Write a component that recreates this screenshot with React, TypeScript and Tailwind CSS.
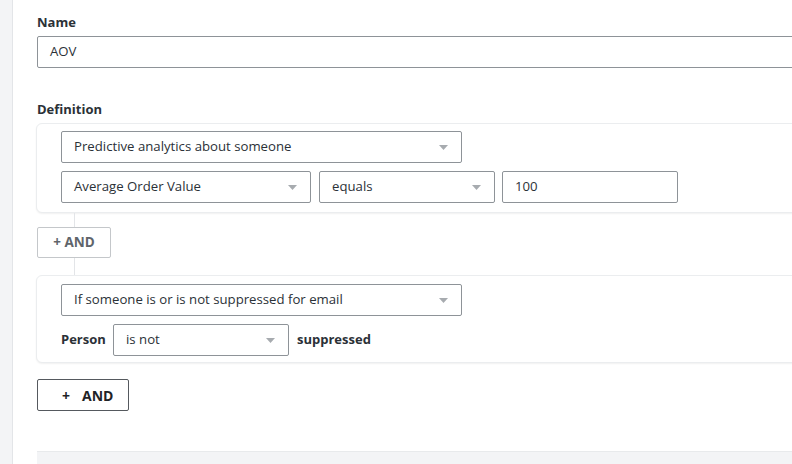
import React from "react";

const font = { fontFamily: "'Open Sans', 'Liberation Sans', sans-serif" };

function Caret() {
  return (
    <svg width="9" height="5" viewBox="0 0 9 5" className="shrink-0">
      <path d="M0 0 L9 0 L4.5 5 Z" fill="#a7abaf" />
    </svg>
  );
}

function Select({ w, text }: { w: string; text: string }) {
  return (
    <div
      className={`${w} shrink-0 h-[32px] border border-[#8e9398] rounded-[2px] bg-white flex items-center justify-between pl-[12px] pr-[13px] text-[13.2px] text-[#2b3137]`}
    >
      <span>{text}</span>
      <Caret />
    </div>
  );
}

export default function App() {
  return (
    <div className="w-[792px] h-[464px] overflow-hidden flex bg-white" style={font}>
      <div className="w-[13px] shrink-0 bg-[#f3f4f6] border-r border-[#e3e5e8]" />
      <div className="flex-1 pl-[24px] pt-[14px] flex flex-col">
        <div className="shrink-0 text-[13px] font-bold text-[#2b3137] leading-[16px]">Name</div>
        <div className="shrink-0 mt-[6px] w-[800px] h-[32px] border border-[#8e9398] rounded-[2px] flex items-center pl-[12px] text-[13.2px] text-[#2b3137]">
          AOV
        </div>
        <div className="shrink-0 mt-[33px] text-[13px] font-bold text-[#2b3137] leading-[16px]">Definition</div>
        <div className="shrink-0 mt-[6px] -ml-px w-[800px] rounded-[6px] border border-[#ebedef] shadow-[0_1px_2px_rgba(0,0,0,0.06)] bg-white pl-[24px] pt-[7px] pb-[9px] flex flex-col gap-[8px]">
          <Select w="w-[401px]" text="Predictive analytics about someone" />
          <div className="flex">
            <Select w="w-[250px]" text="Average Order Value" />
            <div className="w-[8px] shrink-0" />
            <Select w="w-[176px]" text="equals" />
            <div className="w-[7px] shrink-0" />
            <div className="w-[176px] shrink-0 h-[32px] border border-[#8e9398] rounded-[2px] flex items-center pl-[12px] text-[13.2px] text-[#2b3137]">
              100
            </div>
          </div>
        </div>
        <div className="shrink-0 ml-[37px] w-px h-[14px] bg-[#e3e5e8]" />
        <div className="shrink-0 w-[74px] h-[31px] border border-[#c4c7ca] rounded-[2px] flex items-center justify-center text-[13.5px] font-bold text-[#5f656b]">
          + AND
        </div>
        <div className="shrink-0 ml-[37px] w-px h-[17px] bg-[#e3e5e8]" />
        <div className="shrink-0 -ml-px w-[800px] rounded-[6px] border border-[#ebedef] shadow-[0_1px_2px_rgba(0,0,0,0.06)] bg-white pl-[24px] pt-[8px] pb-[6px] flex flex-col gap-[8px]">
          <Select w="w-[401px]" text="If someone is or is not suppressed for email" />
          <div className="flex items-center">
            <span className="text-[13px] font-bold text-[#2b3137] w-[52px]">Person</span>
            <Select w="w-[176px]" text="is not" />
            <span className="ml-[8px] text-[13px] font-bold text-[#2b3137]">suppressed</span>
          </div>
        </div>
        <div className="shrink-0 mt-[16px] w-[92px] h-[32px] border border-[#55595e] rounded-[2px] flex items-center pl-[24px] gap-[12px] text-[14px] font-bold text-[#1f2327]">
          <span>+</span>
          <span>AND</span>
        </div>
        <div className="shrink-0 mt-[40px] w-[800px] h-[20px] bg-[#f3f4f6] border-t border-[#e8eaec]" />
      </div>
    </div>
  );
}
